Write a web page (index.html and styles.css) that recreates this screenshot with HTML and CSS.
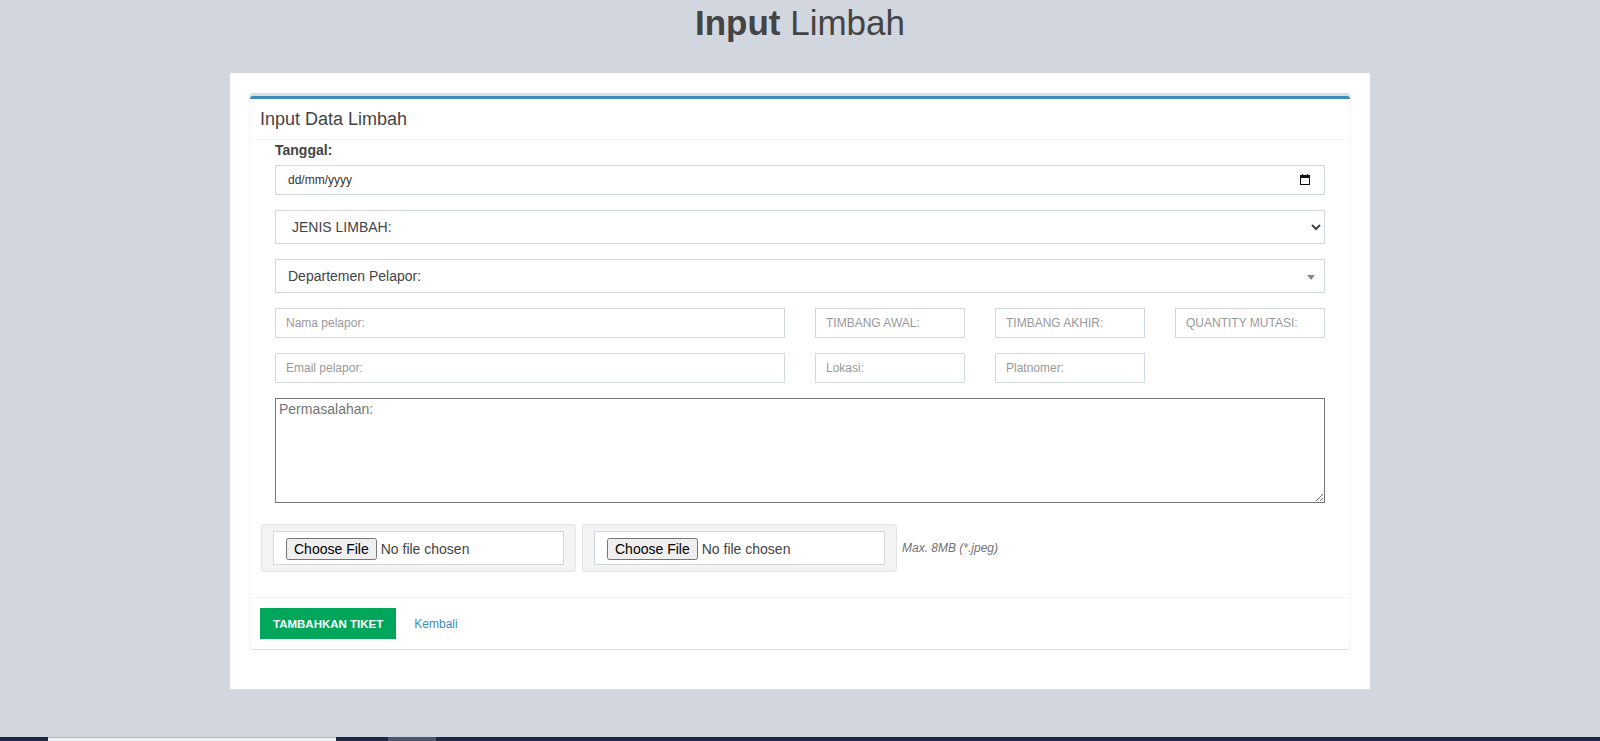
FILE: index.html
```html
<!DOCTYPE html>
<html lang="id">
<head>
<meta charset="utf-8">
<title>Input Limbah</title>
<link rel="stylesheet" href="styles.css">
</head>
<body>
<h1 class="page-title"><b>Input</b> Limbah</h1>
<div class="card">
  <div class="box">
    <div class="box-header"><h3 class="box-title">Input Data Limbah</h3></div>
    <div class="box-body">
      <div class="group pad">
        <label class="lbl">Tanggal:</label>
        <div class="date-wrap">
          <input type="text" class="ctl ctl-sm ctl-date" placeholder="dd/mm/yyyy">
          <svg class="cal" width="10" height="11" viewBox="0 0 10 11" aria-hidden="true">
            <rect x="0.5" y="1.5" width="9" height="9" fill="none" stroke="#111" stroke-width="1"/>
            <rect x="0" y="1" width="10" height="3" fill="#111"/>
            <rect x="2" y="0" width="1" height="2" fill="#111"/>
            <rect x="7" y="0" width="1" height="2" fill="#111"/>
          </svg>
        </div>
      </div>
      <div class="group pad">
        <select class="ctl ctl-select"><option>JENIS LIMBAH:</option></select>
      </div>
      <div class="group pad">
        <span class="s2"><span class="s2-text">Departemen Pelapor:</span><b class="s2-arrow"></b></span>
      </div>
      <div class="fields">
        <input class="ctl ctl-sm" placeholder="Nama pelapor:">
        <input class="ctl ctl-sm" placeholder="TIMBANG AWAL:">
        <input class="ctl ctl-sm" placeholder="TIMBANG AKHIR:">
        <input class="ctl ctl-sm" placeholder="QUANTITY MUTASI:">
        <input class="ctl ctl-sm" placeholder="Email pelapor:">
        <input class="ctl ctl-sm" placeholder="Lokasi:">
        <input class="ctl ctl-sm" placeholder="Platnomer:">
      </div>
      <div class="group pad group-text">
        <textarea class="area" placeholder="Permasalahan:"></textarea>
      </div>
      <div class="files">
        <div class="well"><input type="file" class="ctl ctl-file"></div>
        <div class="well"><input type="file" class="ctl ctl-file"></div>
        <span class="help">Max. 8MB (*.jpeg)</span>
      </div>
    </div>
    <div class="box-footer">
      <button class="btn-add" type="button">TAMBAHKAN TIKET</button>
      <a class="back" href="#">Kembali</a>
    </div>
  </div>
</div>
<div class="taskbar">
  <span class="tb tb-a"></span>
  <span class="tb tb-b"></span>
  <span class="tb tb-a2"></span>
  <span class="tb tb-c"></span>
  <span class="tb tb-rest"></span>
</div>
</body>
</html>
```

FILE: styles.css
```css
html, body {
  margin: 0;
  padding: 0;
}
body {
  background: #d2d6de;
  font-family: "Liberation Sans", Arial, sans-serif;
  color: #444;
  font-size: 14px;
  height: 741px;
  overflow: hidden;
}
.page-title {
  margin: 0;
  padding-top: 3px;
  font-size: 35px;
  line-height: 40px;
  font-weight: normal;
  text-align: center;
  color: #444;
}
.page-title b {
  font-weight: bold;
}
.card {
  width: 1140px;
  margin: 30px auto 48px;
  background: #fff;
  padding: 20px;
  box-sizing: border-box;
  height: 616px;
}
.box {
  background: #fff;
  border-top: 3px solid #3c8dbc;
  border-radius: 3px;
  box-shadow: 0 -3px 0 #dadde3, 0 1px 1px rgba(0,0,0,0.12), 0 0 0 1px rgba(0,0,0,0.02);
  margin-top: 3px;
}
.box-header {
  padding: 10px;
  border-bottom: 1px solid #f4f4f4;
}
.box-title {
  margin: 0;
  font-size: 18px;
  line-height: 20px;
  font-weight: normal;
  color: #444;
}
.box-body {
  padding: 0 10px 25px;
}
.pad {
  padding: 0 15px;
}
.group {
  margin-bottom: 15px;
}
.lbl {
  display: block;
  font-weight: bold;
  font-size: 14px;
  line-height: 20px;
  margin-bottom: 5px;
  color: #444;
}
.ctl {
  display: block;
  width: 100%;
  box-sizing: border-box;
  border: 1px solid #d2d6de;
  border-radius: 0;
  background: #fff;
  color: #555;
  font-family: "Liberation Sans", Arial, sans-serif;
  font-size: 14px;
  height: 34px;
  padding: 6px 12px;
  margin: 0;
  outline: none;
}
.ctl-sm {
  height: 30px;
  padding: 5px 10px;
  font-size: 12px;
}
.ctl::placeholder {
  color: #999;
  opacity: 1;
}
.date-wrap {
  position: relative;
}
.ctl-date {
  padding-left: 12px;
  padding-right: 30px;
}
.ctl-date::placeholder {
  color: #333;
}
.cal {
  position: absolute;
  right: 15px;
  top: 9px;
}
.ctl-select {
  color: #444;
}
.s2 {
  display: flex;
  align-items: center;
  position: relative;
  height: 34px;
  box-sizing: border-box;
  border: 1px solid #d2d6de;
  padding: 6px 12px;
  color: #444;
  font-size: 14px;
}
.s2-arrow {
  position: absolute;
  right: 9px;
  top: 15px;
  width: 0;
  height: 0;
  border-style: solid;
  border-width: 5px 4px 0 4px;
  border-color: #888 transparent transparent transparent;
}
.fields {
  display: grid;
  grid-template-columns: 17fr 5fr 5fr 5fr;
  column-gap: 30px;
  row-gap: 15px;
  padding: 0 15px;
  margin-bottom: 15px;
}
.group-text {
  margin-bottom: 21px;
}
.area {
  display: block;
  width: 100%;
  box-sizing: border-box;
  height: 105px;
  border: 1px solid #767676;
  border-radius: 0;
  padding: 2px 3px;
  margin: 0;
  font-family: "Liberation Sans", Arial, sans-serif;
  font-size: 14px;
  color: #444;
  resize: both;
}
.area::placeholder {
  color: #757575;
}
.files {
  display: flex;
  align-items: center;
  gap: 6px;
  padding-left: 1px;
}
.well {
  width: 315px;
  box-sizing: border-box;
  background: #f3f3f3;
  border: 1px solid #e3e3e3;
  border-radius: 3px;
  padding: 6px 11px;
}
.ctl-file {
  color: #444;
  font-size: 14px;
  padding: 6px 12px;
}
.help {
  margin-left: -1px;
  font-size: 12px;
  font-style: italic;
  color: #737373;
}
.box-footer {
  border-top: 1px solid #f4f4f4;
  padding: 10px;
  display: flex;
  align-items: center;
}
.btn-add {
  background: #00a65a;
  border: 1px solid #00a65a;
  color: #fff;
  font-family: "Liberation Sans", Arial, sans-serif;
  font-weight: bold;
  font-size: 11.5px;
  height: 31px;
  padding: 0 12px;
  border-radius: 0;
  margin: 0;
}
.back {
  margin-left: 18px;
  color: #3c8dbc;
  font-size: 12px;
  text-decoration: none;
}
.taskbar {
  display: flex;
  height: 4px;
}
.tb {
  display: block;
  height: 4px;
}
.tb-a { width: 48px; background: #1b2946; }
.tb-b { width: 288px; background: #f0f0f0; box-shadow: inset 0 1px 0 #b8bbc0; }
.tb-a2 { width: 52px; background: #1b2946; }
.tb-c { width: 48px; background: #4b5670; }
.tb-rest { flex: 1; background: #1b2946; }
```
